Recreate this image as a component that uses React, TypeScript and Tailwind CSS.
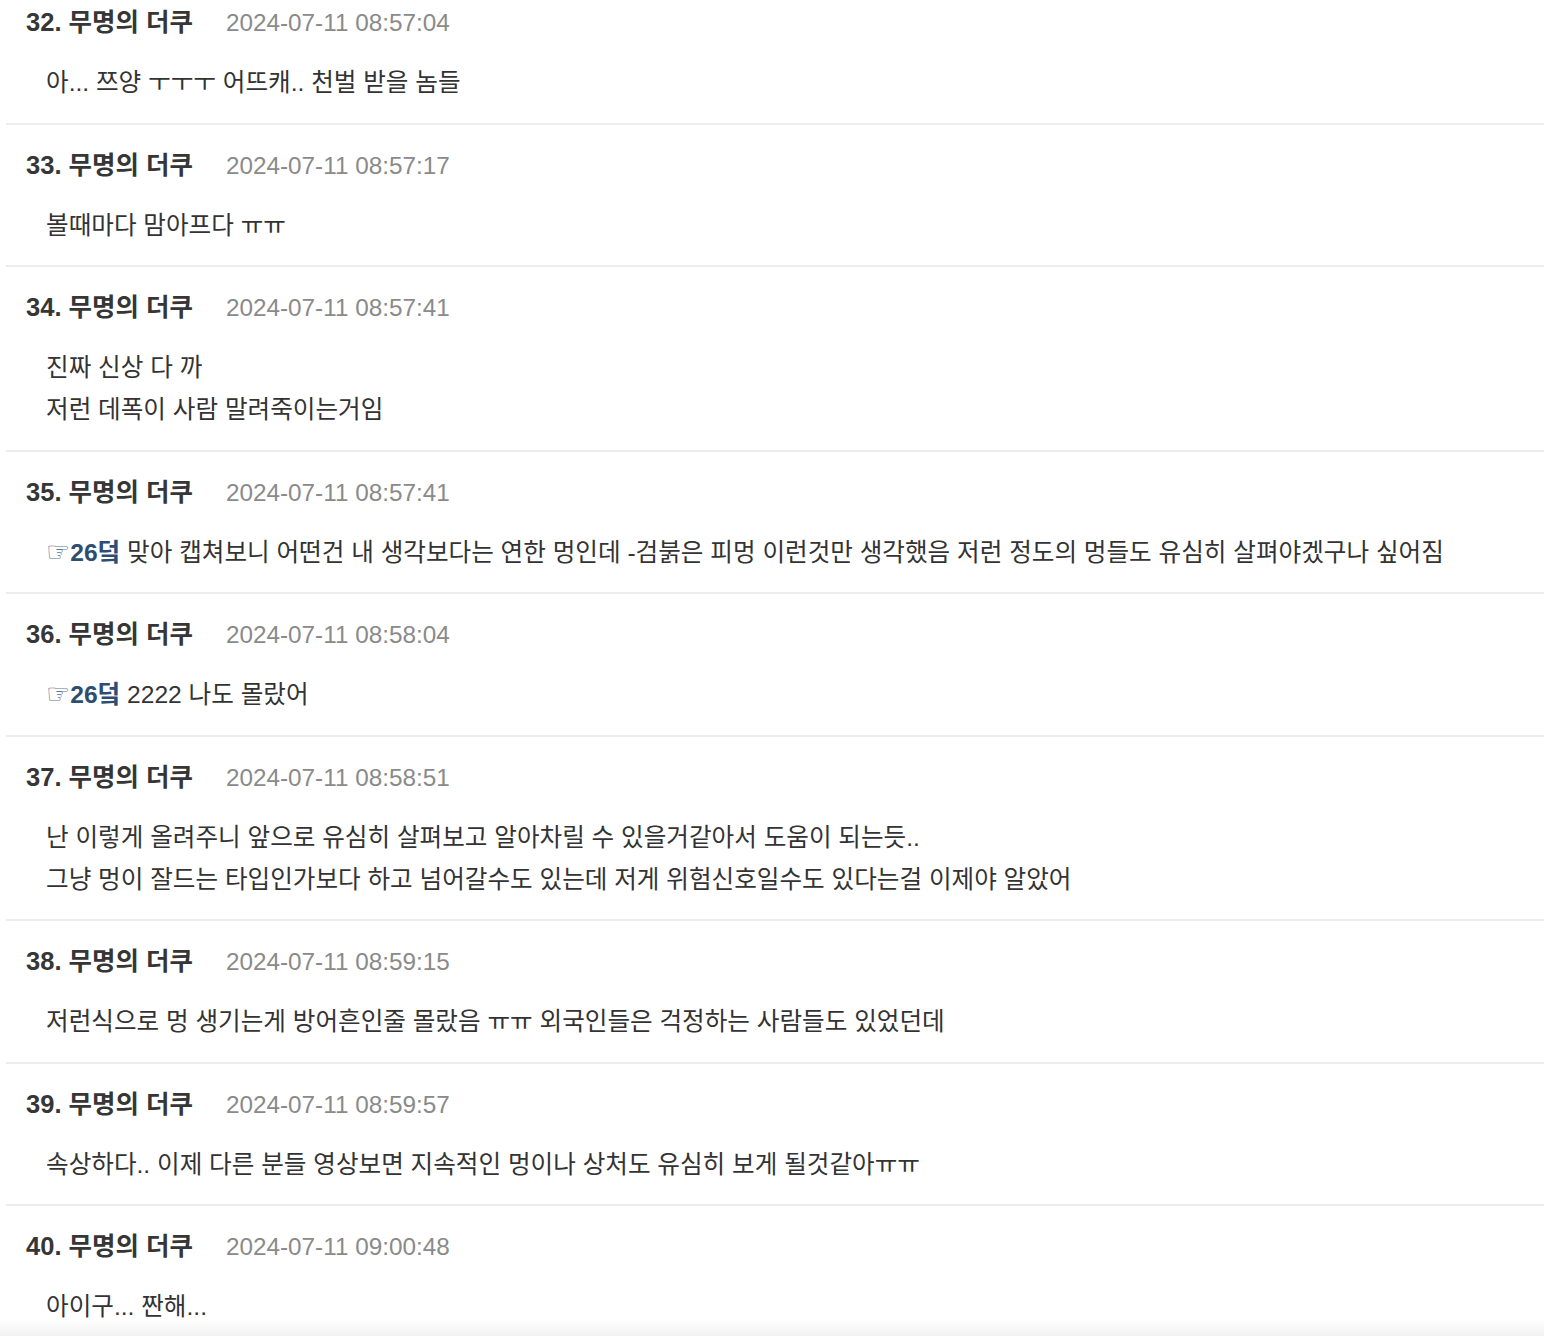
type Comment = {
  no: number;
  date: string;
  lines: { ref?: string; text: string }[];
};

const comments: Comment[] = [
  { no: 32, date: '2024-07-11 08:57:04', lines: [{ text: '아... 쯔양 ㅜㅜㅜ 어뜨캐.. 천벌 받을 놈들' }] },
  { no: 33, date: '2024-07-11 08:57:17', lines: [{ text: '볼때마다 맘아프다 ㅠㅠ' }] },
  {
    no: 34,
    date: '2024-07-11 08:57:41',
    lines: [{ text: '진짜 신상 다 까' }, { text: '저런 데폭이 사람 말려죽이는거임' }],
  },
  {
    no: 35,
    date: '2024-07-11 08:57:41',
    lines: [
      {
        ref: '26덬',
        text: '맞아 캡쳐보니 어떤건 내 생각보다는 연한 멍인데 -검붉은 피멍 이런것만 생각했음 저런 정도의 멍들도 유심히 살펴야겠구나 싶어짐',
      },
    ],
  },
  { no: 36, date: '2024-07-11 08:58:04', lines: [{ ref: '26덬', text: '2222 나도 몰랐어' }] },
  {
    no: 37,
    date: '2024-07-11 08:58:51',
    lines: [
      { text: '난 이렇게 올려주니 앞으로 유심히 살펴보고 알아차릴 수 있을거같아서 도움이 되는듯..' },
      { text: '그냥 멍이 잘드는 타입인가보다 하고 넘어갈수도 있는데 저게 위험신호일수도 있다는걸 이제야 알았어' },
    ],
  },
  {
    no: 38,
    date: '2024-07-11 08:59:15',
    lines: [{ text: '저런식으로 멍 생기는게 방어흔인줄 몰랐음 ㅠㅠ 외국인들은 걱정하는 사람들도 있었던데' }],
  },
  {
    no: 39,
    date: '2024-07-11 08:59:57',
    lines: [{ text: '속상하다.. 이제 다른 분들 영상보면 지속적인 멍이나 상처도 유심히 보게 될것같아ㅠㅠ' }],
  },
  { no: 40, date: '2024-07-11 09:00:48', lines: [{ text: '아이구... 짠해...' }] },
];

const font = { fontFamily: '"Liberation Sans", "Noto Sans CJK KR", sans-serif' };

function CommentItem({ c, last }: { c: Comment; last: boolean }) {
  return (
    <div className={`pt-[24px] pb-[18.5px] ${last ? '' : 'border-b-2 border-[#ededed]'}`}>
      <div className="flex h-[32px] items-baseline pl-[20px] leading-[32px]">
        <span className="text-[25.5px] font-bold text-[#363636]">
          {c.no}. 무명의 더쿠
        </span>
        <span className="ml-[33px] text-[24.3px] text-[#8a8a8a]">{c.date}</span>
      </div>
      <div className="mt-[24px] pl-[40px] text-[24.6px] leading-[42px] text-[#333]">
        {c.lines.map((l, i) => (
          <div key={i} className="h-[42px] whitespace-nowrap">
            {l.ref && (
              <>
                <span
                  className="text-[27px] leading-[0] text-[#5a7596]"
                  style={{ fontFamily: '"DejaVu Sans", sans-serif' }}
                >
                  ☞
                </span>
                <span className="font-bold text-[#2d4d73]">{l.ref}</span>{' '}
              </>
            )}
            {l.text}
          </div>
        ))}
      </div>
    </div>
  );
}

export default function App() {
  return (
    <div className="min-h-screen overflow-hidden bg-white" style={font}>
      <div className="-mt-[18px] ml-[6px]">
        {comments.map((c, i) => (
          <CommentItem key={c.no} c={c} last={i === comments.length - 1} />
        ))}
      </div>
      {/* bottom fade */}
      <div className="pointer-events-none fixed inset-x-0 bottom-0 h-[16px] bg-gradient-to-b from-white/0 to-[#f1f1f1]" />
    </div>
  );
}
